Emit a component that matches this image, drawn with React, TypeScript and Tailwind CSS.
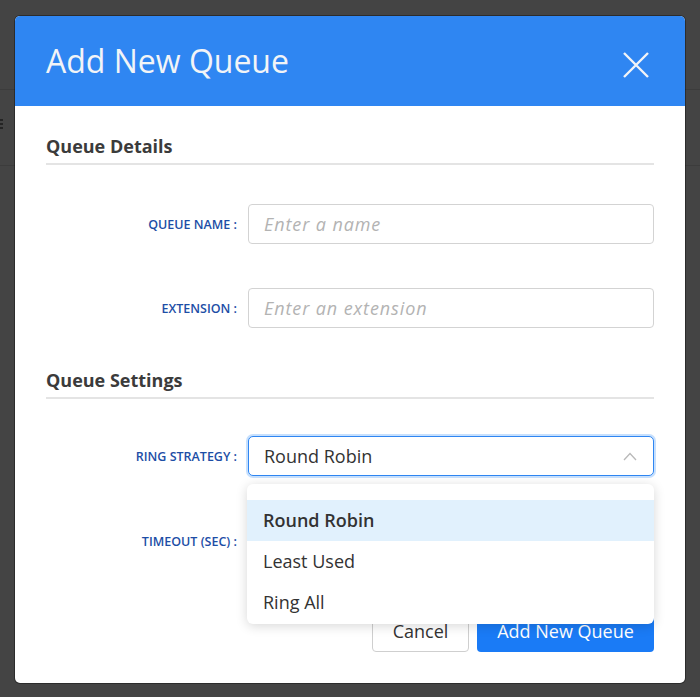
import React from "react";

const font = { fontFamily: '"Open Sans", "Noto Sans", Arial, sans-serif' };

function Label({ children }: { children: React.ReactNode }) {
  return (
    <div className="mt-[3px] w-[191px] shrink-0 text-right text-[12.5px] font-semibold uppercase text-[#1d4ea6]">
      {children}
    </div>
  );
}

function Row({ label, children, className = "" }: { label: string; children: React.ReactNode; className?: string }) {
  return (
    <div className={"flex items-center gap-[11px] " + className}>
      <Label>{label}</Label>
      <div className="relative flex-1">{children}</div>
    </div>
  );
}

function TextInput({ placeholder }: { placeholder: string }) {
  return (
    <div className="flex h-[40px] items-center rounded-[4px] border border-[#d3d3d3] bg-white px-[15px] text-[18px] italic tracking-[0.9px] text-[#b3b3b3]">
      {placeholder}
    </div>
  );
}

export default function App() {
  return (
    <div className="relative h-[697px] w-[700px] overflow-hidden bg-[#444444]" style={font}>
      {/* backdrop page */}
      <div className="h-[90px] border-b border-[#3c3c3c]" />
      <div className="flex h-[76px] items-center border-b border-[#3c3c3c]">
        <svg width="4" height="10" viewBox="0 0 4 10" className="mt-[-8px]">
          <path d="M0 1 H3 M0 5 H3 M0 9 H3" stroke="#1a1a1a" strokeWidth="1.6" />
        </svg>
      </div>

      {/* modal */}
      <div className="absolute left-[15px] top-[16px] flex h-[667px] w-[670px] flex-col overflow-hidden rounded-[5px] bg-white shadow-[0_0_0_1px_rgba(0,0,0,0.35)]">
        <div className="flex h-[90px] shrink-0 items-center justify-between bg-[#2f86f2] pl-[31px] pr-[36px]">
          <div className="text-[32px] leading-none text-[#f2f4f7]">Add New Queue</div>
          <svg width="26" height="26" viewBox="0 0 26 26" className="mt-[8px]">
            <path d="M1 1 L25 25 M25 1 L1 25" stroke="#f2f4f7" strokeWidth="2.4" strokeLinecap="butt" />
          </svg>
        </div>

        <div className="flex flex-1 flex-col px-[31px]">
          <div className="mt-[28px] border-b-2 border-[#e4e4e4] pb-[5px] text-[18px] font-bold leading-[24px] text-[#3b3b3b]">
            Queue Details
          </div>

          <Row label="Queue Name :" className="mt-[39px]">
            <TextInput placeholder="Enter a name" />
          </Row>
          <Row label="Extension :" className="mt-[44px]">
            <TextInput placeholder="Enter an extension" />
          </Row>

          <div className="mt-[40px] border-b-2 border-[#e4e4e4] pb-[5px] text-[18px] font-bold leading-[24px] text-[#3b3b3b]">
            Queue Settings
          </div>

          <Row label="Ring Strategy :" className="z-10 mt-[37px]">
            <div className="flex h-[40px] items-center justify-between rounded-[5px] border border-[#2f86f2] bg-white pl-[15px] pr-[16px] text-[18px] text-[#333333] shadow-[0_0_0_2px_#c7e0fd]">
              <span>Round Robin</span>
              <svg width="14" height="9" viewBox="0 0 14 9">
                <path d="M1 8 L7 1.5 L13 8" fill="none" stroke="#b9b9b9" strokeWidth="1.3" />
              </svg>
            </div>
            <div className="absolute left-[-1px] right-0 top-[48px] rounded-[6px] bg-white pt-[16px] pb-[1px] shadow-[0_2px_12px_rgba(0,0,0,0.16)]">
              <div className="flex h-[41px] items-center bg-[#e1f1fd] pl-[16px] text-[18px] font-semibold text-[#333333]">
                Round Robin
              </div>
              <div className="flex h-[41px] items-center pl-[16px] text-[18px] text-[#333333]">Least Used</div>
              <div className="flex h-[41px] items-center pl-[16px] text-[18px] text-[#333333]">Ring All</div>
            </div>
          </Row>

          <Row label="Timeout (sec) :" className="mt-[45px]">
            <div className="h-[40px] rounded-[4px] border border-[#d3d3d3] bg-white" />
          </Row>

          <div className="mt-[50px] flex justify-end gap-[8px]">
            <div className="flex h-[41px] w-[97px] items-center justify-center rounded-[4px] border border-[#cfcfcf] bg-white text-[18px] text-[#333333]">
              Cancel
            </div>
            <div className="flex h-[41px] w-[177px] items-center justify-center rounded-[4px] bg-[#1a7bf6] text-[18px] text-white">
              Add New Queue
            </div>
          </div>
        </div>
      </div>
    </div>
  );
}
